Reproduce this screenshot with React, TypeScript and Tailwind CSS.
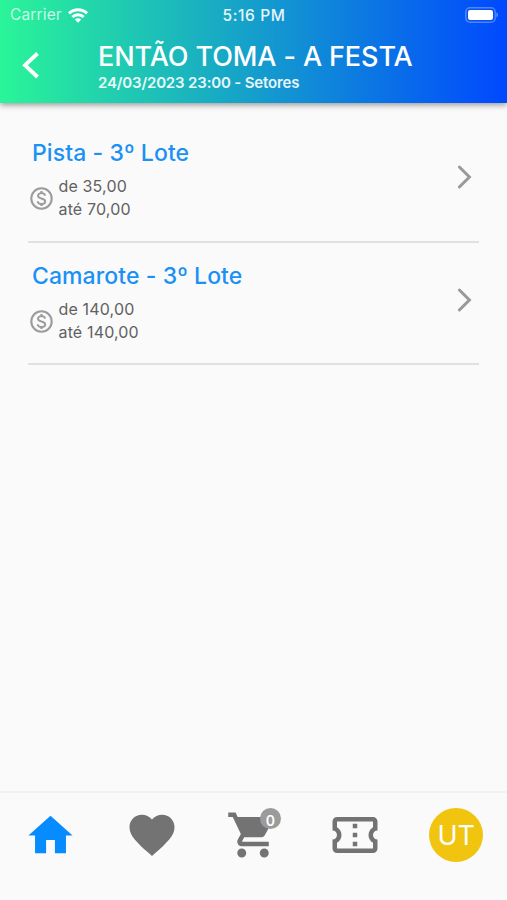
import React from "react";

type Lot = { name: string; from: string; to: string };

const lots: Lot[] = [
  { name: "Pista - 3º Lote", from: "35,00", to: "70,00" },
  { name: "Camarote - 3º Lote", from: "140,00", to: "140,00" },
];

function Icon({ d, className }: { d: string; className: string }) {
  return (
    <svg viewBox="0 0 24 24" fill="currentColor" className={className}>
      <path d={d} />
    </svg>
  );
}

const HOME = "M10 20v-6h4v6h5v-8h3L12 3 2 12h3v8z";
const HEART =
  "M12 21.35l-1.45-1.32C5.4 15.36 2 12.28 2 8.5 2 5.42 4.42 3 7.5 3c1.74 0 3.41.81 4.5 2.09C13.09 3.81 14.76 3 16.5 3 19.58 3 22 5.42 22 8.5c0 3.78-3.4 6.86-8.55 11.54L12 21.35z";
const CART =
  "M7 18c-1.1 0-1.99.9-1.99 2S5.9 22 7 22s2-.9 2-2-.9-2-2-2zM1 2v2h2l3.6 7.59-1.35 2.45c-.16.28-.25.61-.25.96 0 1.1.9 2 2 2h12v-2H7.42c-.14 0-.25-.11-.25-.25l.03-.12.9-1.63h7.45c.75 0 1.41-.41 1.75-1.03l3.58-6.49c.08-.14.12-.31.12-.48 0-.55-.45-1-1-1H5.21l-.94-2H1zm16 16c-1.1 0-1.99.9-1.99 2s.89 2 1.99 2 2-.9 2-2-.9-2-2-2z";
const TICKET =
  "M22 10V6c0-1.11-.9-2-2-2H4c-1.1 0-1.99.89-1.99 2v4c1.1 0 1.99.9 1.99 2s-.89 2-2 2v4c0 1.1.9 2 2 2h16c1.1 0 2-.9 2-2v-4c-1.1 0-2-.9-2-2s.9-2 2-2zm-2-1.46c-1.19.69-2 1.99-2 3.46s.81 2.77 2 3.46V18H4v-2.54c1.19-.69 2-1.99 2-3.46 0-1.48-.8-2.77-1.99-3.46L4 6h16v2.54zM11 15h2v2h-2zm0-4h2v2h-2zm0-4h2v2h-2z";

function MoneyIcon() {
  return (
    <svg viewBox="0 0 27 27" className="-ml-[0.5px] mr-1 h-[27px] w-[27px]" fill="none" stroke="#9c9c9c">
      <circle cx="13.5" cy="13.5" r="10.2" strokeWidth="2.1" />
      <path d="M17.1 10.7c-.2-1.7-1.6-2.6-3.6-2.6s-3.5 1-3.5 2.6c0 1.7 1.4 2.2 3.5 2.8 2.3.6 3.7 1.2 3.7 2.9 0 1.6-1.5 2.6-3.7 2.6s-3.7-1-3.8-2.8" strokeWidth="1.9" />
      <path d="M13.5 6.1v2.2M13.5 18.8v2.2" strokeWidth="2.2" />
    </svg>
  );
}

function StatusBar() {
  return (
    <div className="grid h-[30px] grid-cols-3 items-center pl-[10px] pr-[9px]">
      <div className="flex items-center gap-[6px]">
        <span className="text-[15.5px] leading-none tracking-[0.15px] text-white/75">Carrier</span>
        <svg viewBox="0 0 20 15" className="h-[15px] w-5" fill="none" stroke="white" strokeWidth="2.9">
          <path d="M1 5.4a13 13 0 0 1 18 0" />
          <path d="M4.3 9a8.2 8.2 0 0 1 11.4 0" />
          <path d="M10 14.8l-3.2-3.3a4.6 4.6 0 0 1 6.4 0z" fill="white" stroke="none" />
        </svg>
      </div>
      <span className="pt-px text-center text-[15.5px] font-medium leading-none tracking-[0.6px] text-white/90">5:16 PM</span>
      <svg viewBox="0 0 33 16" className="mb-px h-4 w-[33px] justify-self-end">
        <rect x="0.8" y="0.8" width="29.4" height="14.4" rx="4.2" fill="none" stroke="white" strokeOpacity=".3" strokeWidth="1.5" />
        <rect x="3" y="3" width="25" height="10" rx="2.2" fill="white" />
        <path d="M31.3 5.6a2.5 2.5 0 0 1 0 4.8z" fill="white" fillOpacity=".35" />
      </svg>
    </div>
  );
}

function LotRow({ lot }: { lot: Lot }) {
  return (
    <li className="flex h-[122.7px] items-center border-b-2 border-[#e1e1e1] pr-[7px]">
      <div className="flex-1">
        <h2 className="pl-1 text-[23px] font-medium leading-7 tracking-[0.08px] text-[#1b91f5]">{lot.name}</h2>
        <div className="mt-2 flex items-center">
          <MoneyIcon />
          <div className="text-[16px] leading-[23px] tracking-[0.15px] text-[#616161]">
            <p>de {lot.from}</p>
            <p>até {lot.to}</p>
          </div>
        </div>
      </div>
      <svg viewBox="0 0 16 26" className="mb-[6px] h-[26px] w-4" fill="none" stroke="#999" strokeWidth="3" strokeLinecap="round">
        <path d="M3.4 3l10 10L3.4 23" />
      </svg>
    </li>
  );
}

export default function App() {
  return (
    <div className="flex h-[900px] w-full flex-col overflow-hidden bg-[#fafafa] font-['Inter','Liberation_Sans',sans-serif]">
      <header className="h-[103px] shrink-0 bg-[linear-gradient(90deg,#2af598,#0048ff)] text-white shadow-[0_2px_6px_rgba(0,0,0,0.4)]">
        <StatusBar />
        <div className="flex pl-[21px]">
          <svg viewBox="0 0 20 28" className="mt-[21px] h-7 w-5" fill="none" stroke="white" strokeWidth="3.9">
            <path d="M16.5 2.5L4 14.2 16.5 26" />
          </svg>
          <div className="pl-[57px] pt-[10px]">
            <h1 className="whitespace-nowrap text-[27px] font-medium leading-[34px] tracking-[-0.1px]">ENTÃO TOMA - A FESTA</h1>
            <p className="whitespace-nowrap text-[15px] font-semibold leading-[17px] tracking-[-0.16px] text-white/90">24/03/2023 23:00 - Setores</p>
          </div>
        </div>
      </header>
      <main className="flex-1 px-7 pt-[17px]">
        <ul>
          {lots.map((lot) => (
            <LotRow key={lot.name} lot={lot} />
          ))}
        </ul>
      </main>
      <nav className="grid h-[109px] shrink-0 grid-cols-5 items-start justify-items-center border-t-2 border-[#f2f2f2] pt-[15px] text-[#737373]">
        <Icon d={HOME} className="mt-px h-[53px] w-[53px] text-[#078cff]" />
        <Icon d={HEART} className="h-[54px] w-[54px]" />
        <div className="relative">
          <Icon d={CART} className="h-[54px] w-[54px]" />
          <span className="absolute left-[33.5px] top-0 flex h-[21px] w-[21px] items-center justify-center rounded-full bg-[#9b9b9b] pt-[4px] text-[14px] font-semibold leading-none text-white">
            0
          </span>
        </div>
        <Icon d={TICKET} className="h-[54px] w-[54px]" />
        <div className="flex h-[54px] w-[54px] items-center justify-center rounded-full bg-[#f1c40f] text-[27px] leading-none text-white">UT</div>
      </nav>
    </div>
  );
}
